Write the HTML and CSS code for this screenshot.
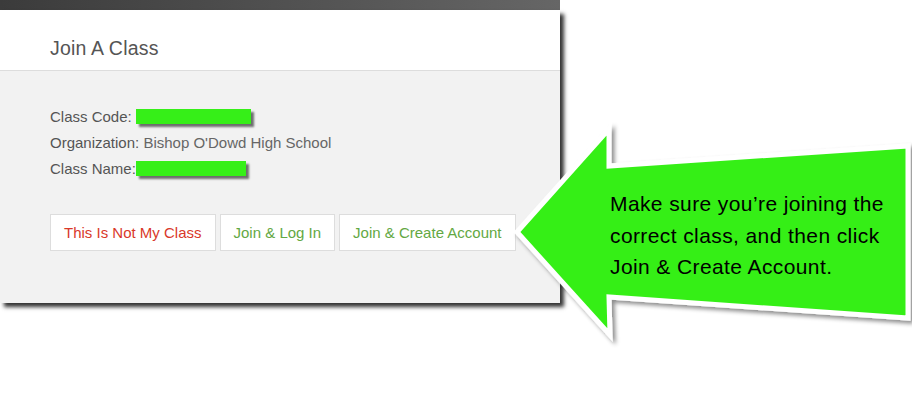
FILE: index.html
```html
<!DOCTYPE html>
<html lang="en">
<head>
    <meta charset="UTF-8"/>
    <title>Join A Class</title>
    <link rel="stylesheet" href="styles.css">
</head>
<body>
<div class="page">
    <div class="topBar"></div>
    <div class="panel">
        <div class="panelHead">Join A Class</div>
        <div class="panelBody">
            <div class="row">Class Code: <span class="redact code"></span></div>
            <div class="row">Organization: <span class="value">Bishop O'Dowd High School</span></div>
            <div class="row">Class Name:<span class="redact name"></span></div>
            <div class="btns">
                <a href="javascript:;" class="btn notMine">This Is Not My Class</a>
                <a href="javascript:;" class="btn join">Join &amp; Log In</a>
                <a href="javascript:;" class="btn join">Join &amp; Create Account</a>
            </div>
        </div>
    </div>

    <!-- callout arrow over the page -->
    <div class="callout">
        <svg class="arrow" width="412" height="240" viewBox="0 0 412 240">
            <defs>
                <filter id="shade" x="-10%" y="-10%" width="120%" height="120%">
                    <feDropShadow dx="3" dy="3" stdDeviation="2" flood-color="#000" flood-opacity="0.45"/>
                </filter>
            </defs>
            <polygon points="17,122 109,19 109,56 408,36 408,208 109,187 110,225"
                     fill="#36ef18" stroke="#fff" stroke-width="5" stroke-linejoin="miter"
                     filter="url(#shade)"/>
        </svg>
        <p class="calloutText">Make sure you’re joining the<br>correct class, and then click<br>Join &amp; Create Account.</p>
    </div>
</div>
</body>
</html>
```

FILE: styles.css
```css
* {
    margin: 0;
    padding: 0;
}

body {
    background: #fff;
    font-family: "Liberation Sans", Arial, Helvetica, sans-serif;
}

.page {
    position: relative;
    width: 912px;
    height: 405px;
    overflow: hidden;
}

.topBar {
    width: 560px;
    height: 10px;
    background: linear-gradient(to right, #3b3b3b, #666);
}

.panel {
    width: 560px;
    box-shadow: 4px 4px 4px rgba(0, 0, 0, 0.8);
}

.panelHead {
    padding: 27px 50px 11px;
    line-height: 22px;
    font-size: 19.5px;
    letter-spacing: 0.2px;
    color: #555;
    background: #fff;
    border-bottom: 1px solid #ddd;
}

.panelBody {
    padding: 33px 50px 52px;
    background: #f2f2f2;
}

.row {
    font-size: 15px;
    line-height: 26px;
    color: #555;
}

.row .value {
    color: #666;
}

.redact {
    display: inline-block;
    height: 15px;
    vertical-align: -2px;
    background: #36ef18;
    box-shadow: 3px 3px 2px rgba(0, 0, 0, 0.55);
}

.redact.code {
    width: 115px;
}

.redact.name {
    width: 110px;
}

.btns {
    display: flex;
    gap: 4px;
    margin-top: 32px;
}

.btn {
    display: block;
    flex: none;
    padding: 0 13px;
    line-height: 35px;
    font-size: 15px;
    white-space: nowrap;
    text-decoration: none;
    background: #fff;
    border: 1px solid #ddd;
}

.btn.notMine {
    color: #d9382a;
}

.btn.join {
    color: #63a843;
}

.callout {
    position: absolute;
    left: 500px;
    top: 110px;
    width: 412px;
    height: 240px;
}

.arrow {
    display: block;
}

.calloutText {
    position: absolute;
    left: 110px;
    top: 78px;
    font-size: 21px;
    letter-spacing: 0.4px;
    line-height: 31.5px;
    color: #000;
    white-space: nowrap;
}
```
